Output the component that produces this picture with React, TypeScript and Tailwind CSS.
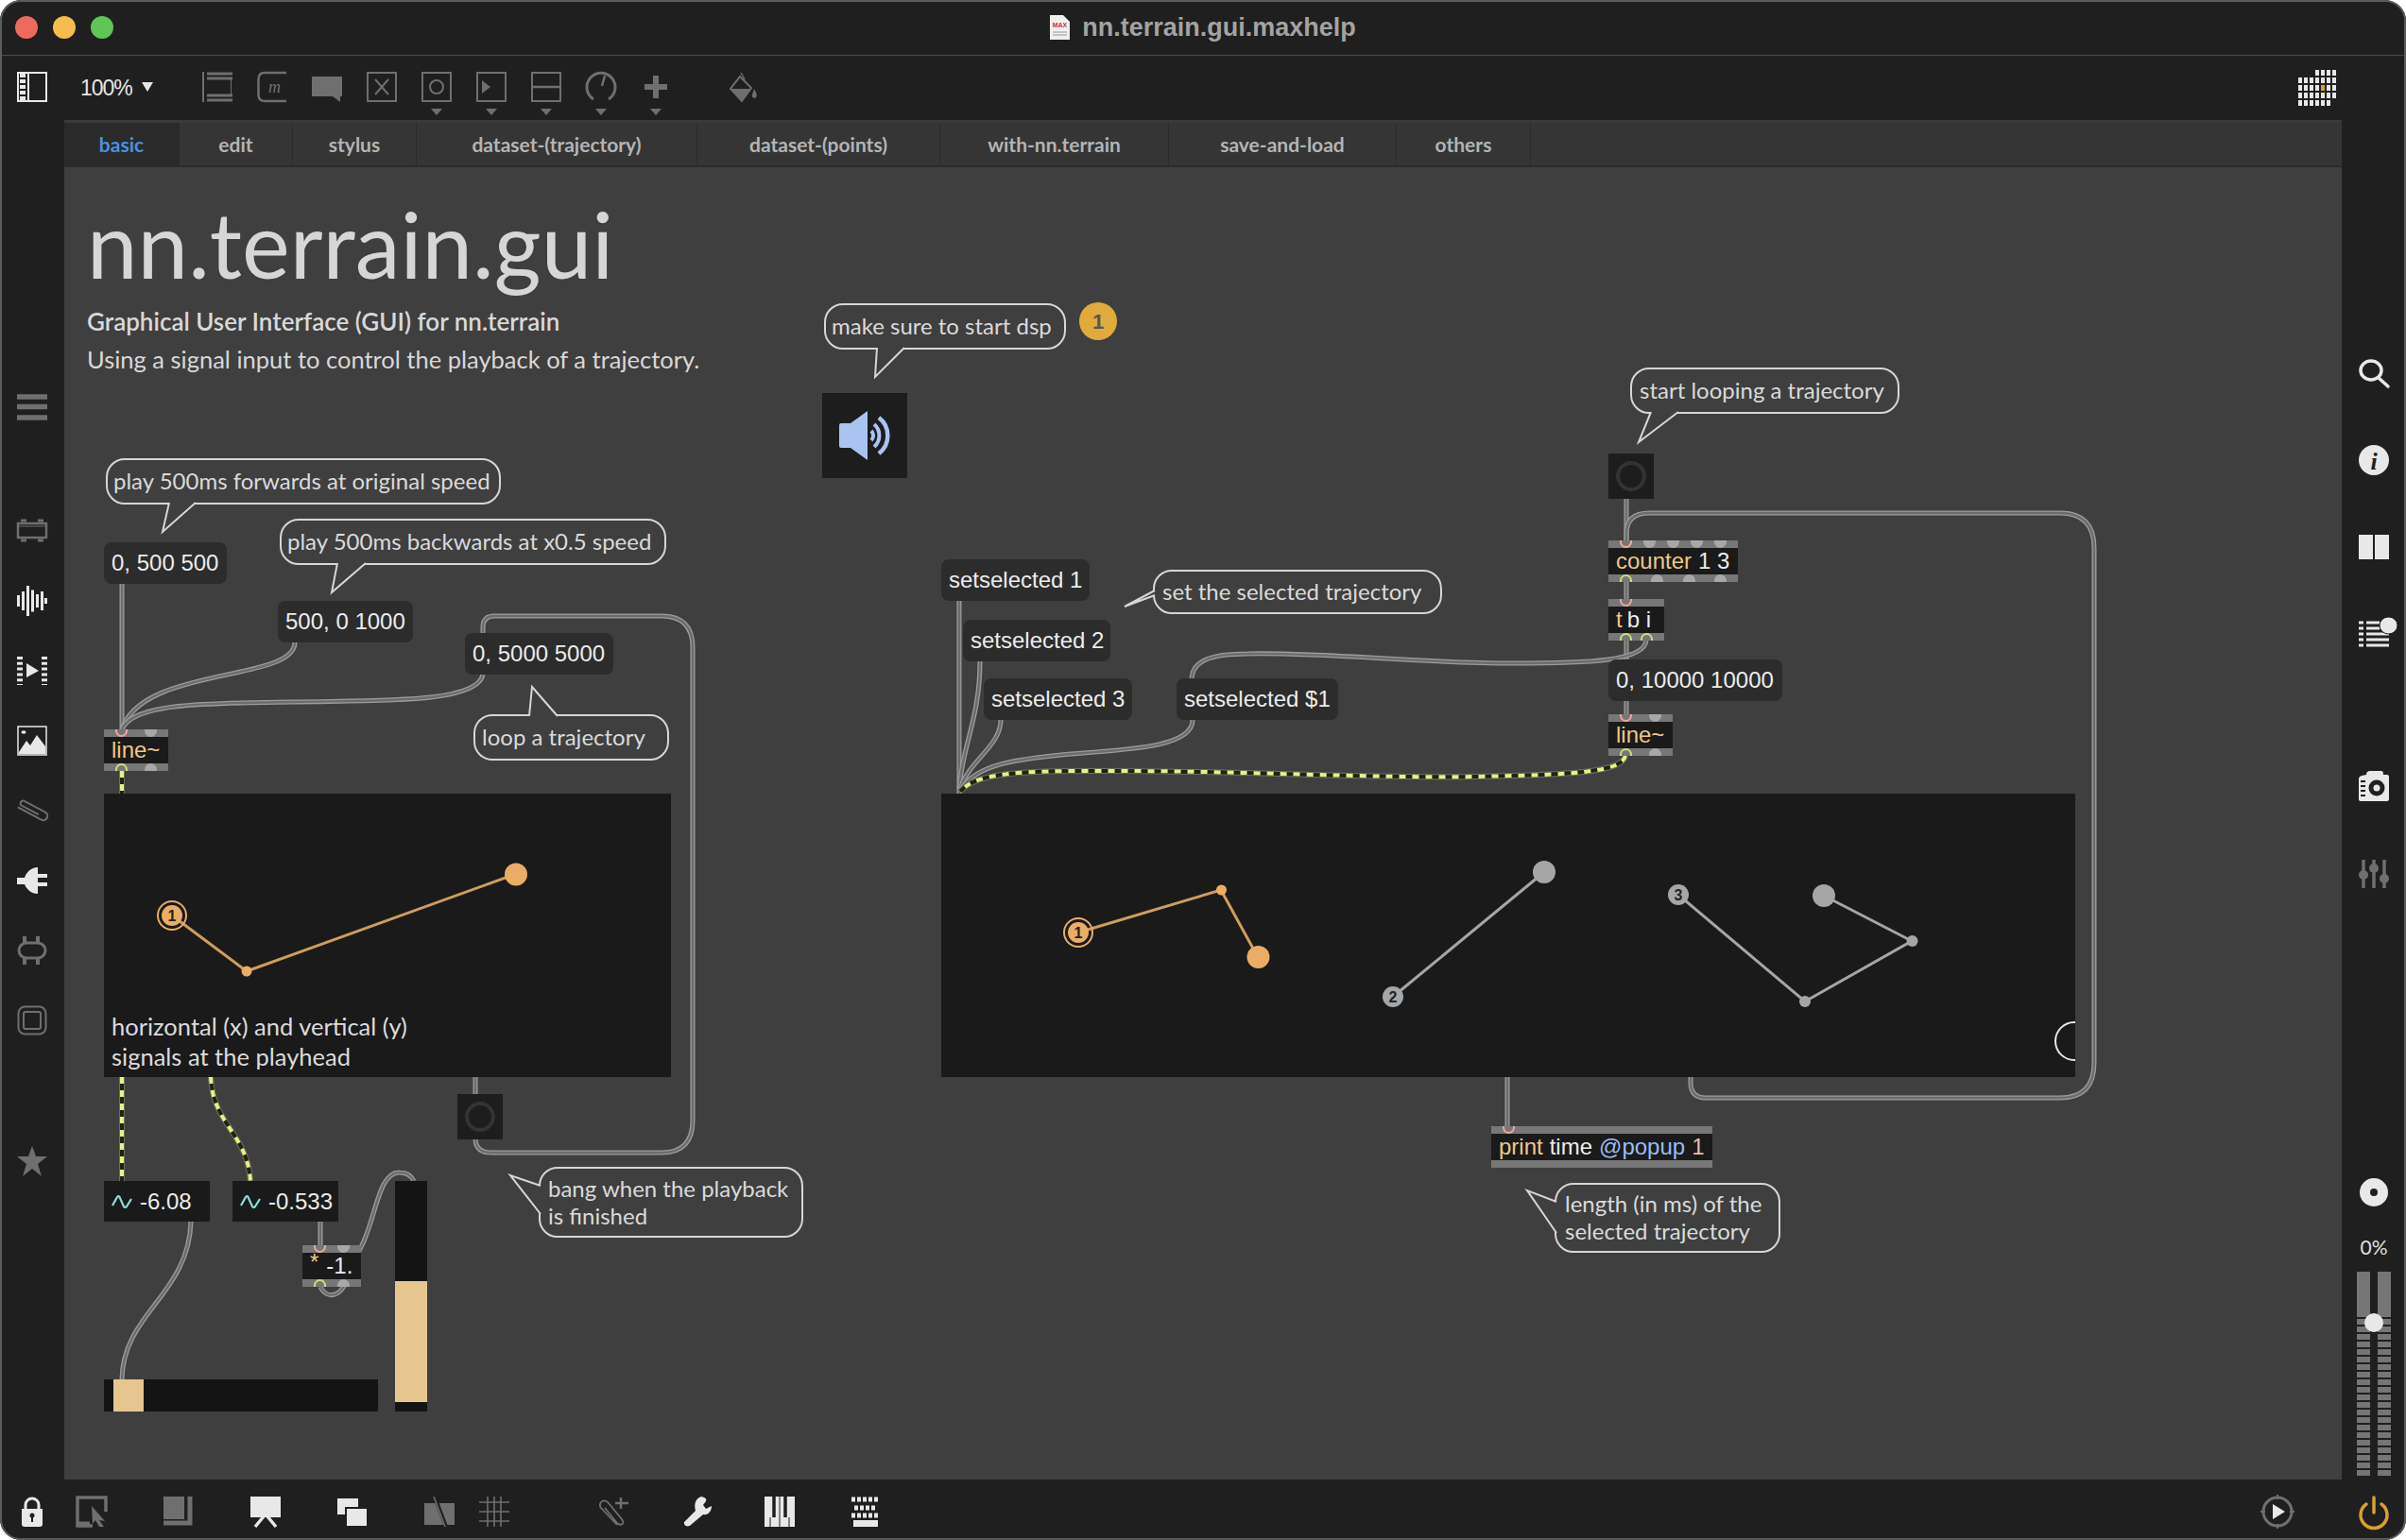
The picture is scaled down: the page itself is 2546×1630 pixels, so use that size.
import React from 'react';
import clsx from 'clsx';

const GRAY = '#6f6f6f';
const WHITE = '#e8e8e8';
const CANVAS = '#3f3f3f';

const Ic: React.FC<{ children: React.ReactNode; className?: string }> = ({ children, className }) => (
  <svg viewBox="0 0 32 32" className={clsx('w-8 h-8 shrink-0 overflow-visible', className)}>
    {children}
  </svg>
);

/* ---------- toolbar icons ---------- */
const ToolIcons = [
  <>
    <path d="M1 0V32" stroke={GRAY} strokeWidth="2" />
    <path d="M5 2H32M5 7H32M5 25H32M5 30H32" stroke={GRAY} strokeWidth="3" />
    <path d="M30.5 7V25" stroke={GRAY} strokeWidth="1" />
  </>,
  <>
    <path d="M31 1H8Q1.5 1 1.5 8V24Q1.5 31 8 31H31" stroke={GRAY} strokeWidth="2.5" fill="none" />
    <text x="12" y="22" fontSize="18" fontStyle="italic" fontFamily="Liberation Serif" fill={GRAY}>m</text>
  </>,
  <path d="M0 5H32V26H30V32L22 26H0Z" fill={GRAY} />,
  <>
    <rect x="1" y="1" width="30" height="30" stroke={GRAY} strokeWidth="2" fill="none" />
    <path d="M9 8L23 24M23 8L9 24" stroke={GRAY} strokeWidth="2" />
  </>,
  <>
    <rect x="1" y="1" width="30" height="30" stroke={GRAY} strokeWidth="2" fill="none" />
    <circle cx="16" cy="16" r="7" stroke={GRAY} strokeWidth="2" fill="none" />
  </>,
  <>
    <rect x="1" y="1" width="30" height="30" stroke={GRAY} strokeWidth="2" fill="none" />
    <path d="M6 9L15 16L6 23Z" fill={GRAY} />
  </>,
  <>
    <rect x="1" y="1" width="30" height="30" stroke={GRAY} strokeWidth="2" fill="none" />
    <path d="M1 16H31" stroke={GRAY} strokeWidth="2.5" />
  </>,
  <>
    <path d="M8 29A15 15 0 1 1 24 29" stroke={GRAY} strokeWidth="3" fill="none" />
    <path d="M17 15L20 4" stroke={GRAY} strokeWidth="2.5" />
  </>,
  <path d="M13 4H19V13H28V19H19V28H13V19H4V13H13Z" fill={GRAY} />,
  <>
    <path d="M13 1L17 8" stroke={GRAY} strokeWidth="1.5" />
    <path d="M12 5L24 17L14 31L2 18Z" stroke={GRAY} strokeWidth="2" fill="none" />
    <path d="M3 18H24L14 31Z" fill={GRAY} />
    <path d="M27 18C29 22 31 24 29 27C27 29 24 27 25 24Z" fill={GRAY} />
  </>,
];

const GridIcon = () => {
  const cells = [] as React.ReactNode[];
  for (let r = 0; r < 5; r++) {
    for (let c = 0; c < 7; c++) {
      if (r === 0 && c < 3) continue;
      if (r === 4 && c === 6) continue;
      cells.push(<rect key={`${r}-${c}`} x={c * 6} y={r * 8} width="4" height="6" fill={r === 2 && c === 4 ? '#d9a02f' : WHITE} />);
    }
  }
  return <svg viewBox="0 0 40 38" className="w-10 h-[38px]">{cells}</svg>;
};

/* ---------- left sidebar icons ---------- */
const LeftIcons = [
  <>
    <rect x="1" y="8" width="30" height="15" stroke={GRAY} strokeWidth="2.5" fill="none" />
    <path d="M4 5H10M22 5H28M4 26H10M22 26H28" stroke={GRAY} strokeWidth="3" />
    <path d="M2 11H30" stroke={GRAY} strokeWidth="1" />
  </>,
  <>
    {[[1, 12], [6, 20], [11, 32], [16, 23], [21, 14], [26, 20], [30, 6]].map(([x, h]) => (
      <rect key={x} x={x - 1} y={16 - h / 2} width="3" height={h} fill={WHITE} />
    ))}
  </>,
  <>
    <path d="M3 1V31M29 1V31" stroke={WHITE} strokeWidth="6" strokeDasharray="3 2.8" />
    <path d="M10 8L23 16L10 23Z" fill={WHITE} />
  </>,
  <>
    <rect x="1" y="1" width="30" height="30" stroke={WHITE} strokeWidth="1.5" fill="none" />
    <ellipse cx="7" cy="7" rx="2.5" ry="1.8" fill={WHITE} />
    <path d="M2 28L10 16L14 21L21 10L30 22V30H2Z" fill={WHITE} />
  </>,
  <path d="M1 20H29A4.5 4.5 0 0 0 29 11H3A3 3 0 0 0 3 16.5H24" stroke={GRAY} strokeWidth="2" fill="none" transform="rotate(28 16 16)" />,
  <path d="M0 13H8C10 7 15 2 22 2V9H32V13H22V18H32V22H22V30C15 30 10 25 8 20H0Z" fill={WHITE} />,
  <>
    <rect x="2" y="8" width="28" height="16" rx="8" stroke={GRAY} strokeWidth="3" fill="none" />
    <path d="M8 1V8M22 1V8M8 24V31M22 24V31" stroke={GRAY} strokeWidth="4" />
  </>,
  <>
    <rect x="1.5" y="1.5" width="29" height="29" rx="7" stroke={GRAY} strokeWidth="2" fill="none" />
    <rect x="7" y="7" width="18" height="18" rx="2" stroke={GRAY} strokeWidth="2" fill="none" />
  </>,
];

const StarIcon = () => <Ic><path d="M16 0L20 11H32L22 19L26 32L16 24L6 32L10 19L0 11H12Z" fill={GRAY} /></Ic>;

/* ---------- right sidebar icons ---------- */
const RightIcons = {
  search: (
    <Ic>
      <ellipse cx="13" cy="13" rx="11" ry="10" stroke={WHITE} strokeWidth="3.5" fill="none" />
      <path d="M21 21L31 30" stroke={WHITE} strokeWidth="3.5" strokeLinecap="round" />
    </Ic>
  ),
  info: (
    <Ic>
      <circle cx="16" cy="16" r="16" fill={WHITE} />
      <text x="16" y="26" textAnchor="middle" fontSize="26" fontStyle="italic" fontWeight="700" fontFamily="Liberation Serif" fill="#1f1f1f">i</text>
    </Ic>
  ),
  book: (
    <Ic>
      <rect x="0" y="3" width="15" height="26" fill={WHITE} />
      <rect x="17" y="3" width="15" height="26" fill={WHITE} />
    </Ic>
  ),
  list: (
    <Ic>
      <path d="M0 4H5M8 4H22M0 10H5M8 10H22M0 16H5M8 16H32M0 22H5M8 22H32M0 28H5M8 28H32" stroke={WHITE} strokeWidth="3" />
      <ellipse cx="31.5" cy="7" rx="9.5" ry="9" fill={WHITE} stroke="#1f1f1f" strokeWidth="1" />
    </Ic>
  ),
  camera: (
    <Ic>
      <path d="M8 4Q8 0 12 0H24Q26 0 26 4H30Q32 4 32 6V30Q32 32 30 32H2Q0 32 0 30V8Q0 6 3 5Z" fill={WHITE} />
      <circle cx="19" cy="18" r="8.5" fill="#1f1f1f" />
      <circle cx="19" cy="18" r="3.5" fill={WHITE} />
      <path d="M2 11H7M2 16H7M2 21H7M2 26H7" stroke="#1f1f1f" strokeWidth="2" />
    </Ic>
  ),
  sliders: (
    <Ic>
      <path d="M5 1V31M16 1V31M27 1V31" stroke={GRAY} strokeWidth="3.5" />
      <circle cx="5" cy="17" r="5" fill={GRAY} />
      <circle cx="16" cy="10" r="5" fill={GRAY} />
      <circle cx="27" cy="21" r="5" fill={GRAY} />
    </Ic>
  ),
  disc: (
    <Ic>
      <circle cx="16" cy="16" r="15" fill={WHITE} />
      <circle cx="16" cy="16" r="4" fill="#1f1f1f" />
    </Ic>
  ),
};

/* ---------- bottom bar icons ---------- */
const BottomIcons: { ml: string; icon: React.ReactNode }[] = [
  {
    ml: 'ml-[18px]',
    icon: (
      <>
        <path d="M9 14V9A7 7 0 0 1 23 9V14" stroke={WHITE} strokeWidth="3" fill="none" />
        <path d="M5 13H27V29Q27 32 24 32H8Q5 32 5 29Z" fill={WHITE} />
        <circle cx="16" cy="20" r="2.5" fill="#1f1f1f" />
        <path d="M16 20V27" stroke="#1f1f1f" strokeWidth="2" />
      </>
    ),
  },
  {
    ml: 'ml-[31px]',
    icon: (
      <>
        <path d="M31 16V1H1V31H17" stroke={GRAY} strokeWidth="3.5" fill="none" />
        <path d="M1 29H14" stroke={GRAY} strokeWidth="5" />
        <path d="M16 10L30 26L24 25L29 32L24 32L20 25L17 29Z" fill={GRAY} />
      </>
    ),
  },
  {
    ml: 'ml-[60px]',
    icon: (
      <>
        <rect x="0" y="0" width="22" height="24" fill={GRAY} />
        <path d="M28 0V28H0" stroke={GRAY} strokeWidth="5" fill="none" />
      </>
    ),
  },
  {
    ml: 'ml-[60px]',
    icon: (
      <>
        <rect x="0" y="0" width="32" height="22" fill={WHITE} />
        <path d="M14 21L5 32M18 21L27 32" stroke={WHITE} strokeWidth="3.5" />
      </>
    ),
  },
  {
    ml: 'ml-[60px]',
    icon: (
      <>
        <rect x="0" y="2" width="22" height="17" fill={WHITE} />
        <rect x="9" y="12" width="23" height="20" fill={WHITE} stroke="#1f1f1f" strokeWidth="2" />
      </>
    ),
  },
  {
    ml: 'ml-[60px]',
    icon: (
      <>
        <rect x="0" y="7" width="32" height="23" fill={GRAY} />
        <path d="M11 0L23 32" stroke="#1f1f1f" strokeWidth="4" />
        <path d="M10 0L22 32" stroke={GRAY} strokeWidth="1.5" />
      </>
    ),
  },
  {
    ml: 'ml-[26px]',
    icon: <path d="M9 0V32M16 0V32M23 0V32M0 6H32M0 16H32M0 26H32" stroke={GRAY} strokeWidth="1.6" />,
  },
  {
    ml: 'ml-[94px]',
    icon: (
      <>
        <path d="M20 30L3 12C-1 7 6 1 11 7L25 24C29 30 23 31 20 28L7 12" stroke={GRAY} strokeWidth="1.8" fill="none" />
        <path d="M24 1V13M18 7H32" stroke={GRAY} strokeWidth="2.5" />
      </>
    ),
  },
  {
    ml: 'ml-[57px]',
    icon: (
      <path d="M20 0C25 1 26 3 25 5L22 9L25 13L31 10C31 16 27 20 22 19L9 30C6 33 1 31 2 27L14 15C12 8 14 2 20 0Z" fill={WHITE} />
    ),
  },
  {
    ml: 'ml-[55px]',
    icon: (
      <>
        <rect x="0" y="0" width="32" height="32" fill={WHITE} />
        <path d="M10 0V22M22 0V22" stroke="#1f1f1f" strokeWidth="3.5" />
        <path d="M6 22V32M16 0V32M26 22V32" stroke="#1f1f1f" strokeWidth="1" />
      </>
    ),
  },
  {
    ml: 'ml-[59px]',
    icon: (
      <>
        <path d="M1 3H31M4 12H28M1 20H31" stroke={WHITE} strokeWidth="5" strokeDasharray="4 2" fill="none" />
        <rect x="3" y="25" width="26" height="7" fill={WHITE} />
      </>
    ),
  },
];

/* ---------- patcher pieces ---------- */
const Msg: React.FC<{ className: string; children: React.ReactNode }> = ({ className, children }) => (
  <div className={clsx('absolute h-11 rounded-lg bg-[#2c2c2c] pl-2 flex items-center whitespace-nowrap font-["Liberation_Sans"] text-[24px] text-[#ececec]', className)}>
    {children}
  </div>
);

const Comment: React.FC<{ className: string; pad?: string; children: React.ReactNode }> = ({ className, pad = 'pl-[6px]', children }) => (
  <div className={clsx('absolute flex items-center rounded-[20px] border-2 border-[#d6d6d6] pb-[2px] whitespace-pre text-[24px] leading-[29px] text-[#dadada]', pad, className)}>
    <span>{children}</span>
  </div>
);

const Inlet = ({ on }: { on?: boolean }) => (
  <span className={clsx('w-[13px] h-2 rounded-b-full', on ? 'border-2 border-t-0 border-[#eda89a]' : 'bg-[#a8a8a8]')} />
);
const Outlet = ({ on }: { on?: boolean }) => (
  <span className={clsx('w-[13px] h-2 rounded-t-full', on ? 'border-2 border-b-0 border-[#cfe07c]' : 'bg-[#a8a8a8]')} />
);

const Obj: React.FC<{ className: string; inlets?: number; outlets?: number; on?: number[]; children: React.ReactNode }> = ({ className, inlets = 0, outlets = 0, on = [], children }) => (
  <div className={clsx('absolute h-11 flex flex-col bg-[#1a1a1a] whitespace-nowrap font-["Liberation_Sans"] text-[24px] text-[#ececec]', className)}>
    <div className="h-2 bg-[#777] flex justify-between px-3">
      {Array.from({ length: inlets }).map((_, i) => <Inlet key={i} on={i === 0} />)}
    </div>
    <div className="flex-1 pl-2 flex items-center leading-none">{children}</div>
    <div className="h-2 bg-[#777] flex justify-between px-3">
      {Array.from({ length: outlets }).map((_, i) => <Outlet key={i} on={i === 0 || on.includes(i)} />)}
    </div>
  </div>
);

const Bang = ({ className }: { className: string }) => (
  <div className={clsx('absolute w-12 h-12 bg-[#1d1d1d] flex items-center justify-center', className)}>
    <div className="w-8 h-8 rounded-full border-4 border-[#333]" />
  </div>
);

const NumTilde: React.FC<{ className: string; value: string }> = ({ className, value }) => (
  <div className={clsx('absolute h-[43px] w-28 bg-[#1a1a1a] pl-2 flex items-center gap-2 font-["Liberation_Sans"] text-[24px] text-[#ececec]', className)}>
    <svg viewBox="0 0 22 16" className="w-[22px] h-4">
      <path d="M1 12L6 3Q7 1 8.5 3L13 13Q14.5 15 16 13L21 5" stroke="#8fdde0" strokeWidth="2.2" fill="none" />
    </svg>
    <span>{value}</span>
  </div>
);

const Wire = ({ d }: { d: string }) => (
  <>
    <path d={d} fill="none" stroke="#9c9c9c" strokeWidth="5" />
    <path d={d} fill="none" stroke="#6c6c6c" strokeWidth="2.4" />
  </>
);

const SigWire = ({ d }: { d: string }) => (
  <>
    <path d={d} fill="none" stroke="#70705f" strokeWidth="6" />
    <path d={d} fill="none" stroke="#20230f" strokeWidth="4" />
    <path d={d} fill="none" stroke="#e8f08c" strokeWidth="4" strokeDasharray="7 7" />
  </>
);

const Tail = ({ d }: { d: string }) => <path d={d} fill={CANVAS} stroke="#d6d6d6" strokeWidth="2" />;

const NODE_ORANGE = '#e9ad66';
const LINE_ORANGE = '#cf9d5e';
const NODE_GRAY = '#a6a6a6';

const Labeled: React.FC<{ x: number; y: number; n: string; fill: string; ring?: boolean }> = ({ x, y, n, fill, ring }) => (
  <>
    {ring && <circle cx={x} cy={y} r="15" fill="none" stroke={fill} strokeWidth="2" />}
    <circle cx={x} cy={y} r="11" fill={fill} />
    <text x={x} y={y + 6} textAnchor="middle" fontSize="16" fontWeight="700" fontFamily="Liberation Sans" fill="#222">{n}</text>
  </>
);

const TABS = [
  { label: 'basic', w: 'w-[122px]' },
  { label: 'edit', w: 'w-[120px]' },
  { label: 'stylus', w: 'w-[131px]' },
  { label: 'dataset-(trajectory)', w: 'w-[297px]' },
  { label: 'dataset-(points)', w: 'w-[257px]' },
  { label: 'with-nn.terrain', w: 'w-[242px]' },
  { label: 'save-and-load', w: 'w-[241px]' },
  { label: 'others', w: 'w-[142px]' },
];

const Patcher = () => (
  <div className="relative flex-1 bg-[#3f3f3f] overflow-hidden">
    {/* cables, in window coordinates */}
    <svg viewBox="68 177 2410 1389" className="absolute inset-0 w-full h-full">
      <Wire d="M129 618V772" />
      <Wire d="M312 680C312 722 150 705 129 772" />
      <Wire d="M511 714C505 745 400 741 310 743C210 744 140 745 129 772" />
      <Wire d="M511 670V664Q511 652 523 652H700Q733 652 733 685V1186Q733 1220 700 1220H520Q503 1220 503 1205" />
      <Wire d="M503 1140V1158" />
      <SigWire d="M129 816V840" />
      <SigWire d="M129 1140V1250" />
      <SigWire d="M223 1140C225 1190 262 1200 265 1250" />
      <Wire d="M202 1293C200 1370 130 1390 129 1460" />
      <Wire d="M339 1293V1318" />
      <Wire d="M339 1362C345 1375 362 1375 368 1350L382 1320C398 1290 400 1240 423 1241C432 1241 436 1246 438 1250" />
      <Wire d="M1015 636V840" />
      <Wire d="M1037 700C1037 760 1018 790 1015 835" />
      <Wire d="M1059 762C1059 790 1025 805 1016 835" />
      <Wire d="M1262 762C1262 790 1200 793 1133 798C1080 803 1030 808 1016 838" />
      <SigWire d="M1720 800C1716 818 1660 820 1560 822C1450 824 1300 815 1150 816C1070 816 1030 820 1016 838" />
      <Wire d="M1721 528V572" />
      <Wire d="M1721 616V634" />
      <Wire d="M1721 678V698" />
      <Wire d="M1721 742V756" />
      <Wire d="M1721 572V565Q1721 543 1745 543H2180Q2216 543 2216 580V1125Q2216 1162 2180 1162H1805Q1789 1162 1789 1146V1140" />
      <Wire d="M1742 678C1740 700 1680 702 1600 702C1500 702 1400 690 1320 692C1280 692 1262 700 1261 718" />
      <Wire d="M1595 1140V1192" />
    </svg>

    {/* title block */}
    <h1 className="absolute left-[24px] top-[26px] text-[96px] leading-[110px] font-normal text-[#d6d6d6] whitespace-nowrap">nn.terrain.gui</h1>
    <p className="absolute left-[24px] top-[148px] text-[26px] leading-[30px] font-semibold text-[#d8d8d8] whitespace-nowrap">Graphical User Interface (GUI) for nn.terrain</p>
    <p className="absolute left-[24px] top-[188px] text-[25.5px] leading-[30px] font-normal text-[#d8d8d8] whitespace-nowrap">Using a signal input to control the playback of a trajectory.</p>

    {/* dsp */}
    <Comment className="left-[804px] top-[144px] w-[256px] h-[49px]">make sure to start dsp</Comment>
    <div className="absolute left-[1074px] top-[143px] w-10 h-10 rounded-full bg-[#e0aa3c] flex items-center justify-center font-['Liberation_Sans'] font-bold text-[22px] text-[#555]">1</div>
    <div className="absolute left-[802px] top-[239px] w-[90px] h-[90px] bg-[#1d1d1d]">
      <svg viewBox="0 0 90 90" className="w-full h-full">
        <path d="M20 32H30L48 19V71L30 58H20Q18 58 18 56V34Q18 32 20 32Z" fill="#aac4f2" />
        <path d="M52 40A7 7 0 0 1 52 50" stroke="#aac4f2" strokeWidth="4" fill="none" />
        <path d="M55 33A16 16 0 0 1 55 57" stroke="#aac4f2" strokeWidth="4" fill="none" />
        <path d="M60 26A24 24 0 0 1 60 64" stroke="#aac4f2" strokeWidth="4.5" fill="none" />
      </svg>
    </div>

    {/* left patch */}
    <Comment className="left-[44px] top-[308px] w-[418px] h-[49px]">play 500ms forwards at original speed</Comment>
    <Comment className="left-[228px] top-[372px] w-[409px] h-[49px]">play 500ms backwards at x0.5 speed</Comment>
    <Comment className="left-[433px] top-[579px] w-[207px] h-[49px]" pad="pl-[7px]">loop a trajectory</Comment>
    <Comment className="left-[502px] top-[1058px] w-[280px] h-[75px]" pad="pl-[8px]">{'bang when the playback\nis finished'}</Comment>
    <Msg className="left-[42px] top-[397px] w-[130px]">0, 500 500</Msg>
    <Msg className="left-[226px] top-[459px] w-[143px]">500, 0 1000</Msg>
    <Msg className="left-[424px] top-[493px] w-[157px]">0, 5000 5000</Msg>
    <Obj className="left-[42px] top-[595px] w-[68px]" inlets={2} outlets={2}><span className="text-[#edc888]">line~</span></Obj>

    <div className="absolute left-[42px] top-[663px] w-[600px] h-[300px] bg-[#1a1a1a]">
      <svg viewBox="110 840 600 300" className="absolute inset-0 w-full h-full">
        <path d="M182 969L261 1028L546 925" fill="none" stroke={LINE_ORANGE} strokeWidth="3" />
        <circle cx="261" cy="1028" r="5.5" fill={NODE_ORANGE} />
        <circle cx="546" cy="925.5" r="12" fill={NODE_ORANGE} />
        <Labeled x={182} y={969} n="1" fill={NODE_ORANGE} ring />
      </svg>
      <p className="absolute left-2 bottom-[6px] text-[25.5px] leading-[32px] font-normal text-[#dcdcdc] whitespace-nowrap">horizontal (x) and vertical (y)<br />signals at the playhead</p>
    </div>

    <Bang className="left-[416px] top-[981px]" />
    <NumTilde className="left-[42px] top-[1073px]" value="-6.08" />
    <NumTilde className="left-[178px] top-[1073px]" value="-0.533" />
    <Obj className="left-[252px] top-[1141px] w-[62px]" inlets={2} outlets={2}>
      <span className="text-[#edc888] mr-2 -mt-2">*</span>-1.
    </Obj>
    <div className="absolute left-[42px] top-[1283px] w-[290px] h-[34px] bg-[#141414] pl-[10px]">
      <div className="w-8 h-full bg-[#e6c58e]" />
    </div>
    <div className="absolute left-[350px] top-[1073px] w-[34px] h-[244px] bg-[#141414] pt-[106px]">
      <div className="h-[128px] bg-[#e6c58e]" />
    </div>

    {/* right patch */}
    <Comment className="left-[1657px] top-[212px] w-[285px] h-[49px]" pad="pl-[8px]">start looping a trajectory</Comment>
    <Comment className="left-[1152px] top-[426px] w-[306px] h-[47px]" pad="pl-[8px]">set the selected trajectory</Comment>
    <Comment className="left-[1577px] top-[1075px] w-[239px] h-[74px]" pad="pl-[9px]">{'length (in ms) of the\nselected trajectory'}</Comment>
    <Msg className="left-[928px] top-[415px] w-[157px]">setselected 1</Msg>
    <Msg className="left-[951px] top-[479px] w-[156px]">setselected 2</Msg>
    <Msg className="left-[973px] top-[541px] w-[157px]">setselected 3</Msg>
    <Msg className="left-[1177px] top-[541px] w-[171px]">setselected $1</Msg>
    <Bang className="left-[1634px] top-[303px]" />
    <Obj className="left-[1634px] top-[395px] w-[137px]" inlets={5} outlets={4}>
      <span className="text-[#edc888] mr-[7px]">counter</span>1 3
    </Obj>
    <Obj className="left-[1634px] top-[457px] w-[59px]" inlets={1} outlets={2} on={[1]}>
      <span className="text-[#edc888] mr-[5px]">t</span>b i
    </Obj>
    <Msg className="left-[1634px] top-[521px] w-[184px]">0, 10000 10000</Msg>
    <Obj className="left-[1634px] top-[579px] w-[68px]" inlets={2} outlets={2}><span className="text-[#edc888]">line~</span></Obj>

    <div className="absolute left-[928px] top-[663px] w-[1200px] h-[300px] bg-[#1a1a1a] overflow-hidden">
      <svg viewBox="996 840 1200 300" className="absolute inset-0 w-full h-full">
        <path d="M1141 987L1292 942L1331 1013" fill="none" stroke={LINE_ORANGE} strokeWidth="3" />
        <circle cx="1292.5" cy="942" r="5.5" fill={NODE_ORANGE} />
        <circle cx="1331.5" cy="1013" r="12" fill={NODE_ORANGE} />
        <Labeled x={1141} y={987} n="1" fill={NODE_ORANGE} ring />
        <path d="M1474 1055L1634 923" fill="none" stroke={NODE_GRAY} strokeWidth="3" />
        <circle cx="1634" cy="923" r="12" fill={NODE_GRAY} />
        <Labeled x={1474} y={1055} n="2" fill={NODE_GRAY} />
        <path d="M1776 947L1910 1060L2023 996L1930 948" fill="none" stroke={NODE_GRAY} strokeWidth="3" />
        <circle cx="1910" cy="1060" r="6" fill={NODE_GRAY} />
        <circle cx="2023.5" cy="996" r="6" fill={NODE_GRAY} />
        <circle cx="1930" cy="948" r="12" fill={NODE_GRAY} />
        <Labeled x={1776} y={947} n="3" fill={NODE_GRAY} />
        <circle cx="2195" cy="1102" r="20" fill="none" stroke="#e6e6e6" strokeWidth="2" />
      </svg>
    </div>

    <Obj className="left-[1510px] top-[1015px] w-[234px]" inlets={1}>
      <span className="text-[#edc888] mr-[7px]">print</span>
      <span className="mr-[7px]">time</span>
      <span className="text-[#9dbcf2] mr-[7px]">@popup</span>
      <span className="text-[#f3b8a8]">1</span>
    </Obj>

    {/* comment tails go over the comment borders */}
    <svg viewBox="68 177 2410 1389" className="absolute inset-0 w-full h-full pointer-events-none">
      <Tail d="M179 532L172 563L207 532" />
      <Tail d="M357 596L351 627L387 596" />
      <Tail d="M560 758L563 727L590 758" />
      <Tail d="M928 368L926 399L957 368" />
      <Tail d="M572 1255L540 1244L572 1285" />
      <Tail d="M1747 436L1734 468L1776 436" />
      <Tail d="M1222 625L1190 642L1222 630" />
      <Tail d="M1647 1272L1616 1260L1647 1305" />
    </svg>
  </div>
);

const Meter = () => (
  <div className="relative mt-[14px] w-9 flex gap-2">
    {[0, 1].map((c) => (
      <div key={c} className="w-[14px] flex flex-col gap-[2px]">
        <div className="h-[48px] bg-[#757575]" />
        {Array.from({ length: 21 }).map((_, i) => (
          <div key={i} className="h-[6px] bg-[#757575]" />
        ))}
      </div>
    ))}
    <div className="absolute left-2 top-[44px] w-5 h-5 rounded-full bg-[#e8e8e8]" />
  </div>
);

export default function App() {
  return (
    <div className="w-[2546px] h-[1630px] bg-white overflow-hidden font-['Lato',sans-serif]">
      <div className="relative w-full h-full flex flex-col bg-[#1f1f1f] rounded-[22px] overflow-hidden">
        {/* title bar */}
        <div className="relative h-[59px] shrink-0 border-b border-[#4a4a4a] flex items-center justify-center gap-[13px]">
          <div className="absolute left-4 flex gap-4">
            <span className="w-6 h-6 rounded-full bg-[#ee6a5f]" />
            <span className="w-6 h-6 rounded-full bg-[#f5bd4f]" />
            <span className="w-6 h-6 rounded-full bg-[#61c554]" />
          </div>
          <svg viewBox="0 0 21 26" className="w-[21px] h-[26px]">
            <path d="M0 0H14L21 7V26H0Z" fill="#efefef" />
            <text x="10.5" y="13" textAnchor="middle" fontSize="7" fontWeight="700" fontFamily="Liberation Sans" fill="#c33">MAX</text>
            <path d="M3 18H18M3 21H18" stroke="#999" strokeWidth="1" />
          </svg>
          <span className="font-['Liberation_Sans'] font-bold text-[27px] text-[#a3a3a3]">nn.terrain.gui.maxhelp</span>
        </div>

        {/* toolbar */}
        <div className="relative h-[68px] shrink-0 flex items-start pt-[17px] pl-[18px]">
          <svg viewBox="0 0 32 32" className="w-8 h-8">
            <rect x="1" y="1" width="30" height="30" fill="none" stroke={WHITE} strokeWidth="2" />
            <path d="M12 1V31" stroke={WHITE} strokeWidth="2" />
            <path d="M6 2V30" stroke={WHITE} strokeWidth="6" strokeDasharray="4 2" />
          </svg>
          <span className="ml-[35px] mt-[1px] w-[54px] font-['Liberation_Sans'] text-[23px] leading-8 tracking-[-1px] text-[#e6e6e6]">100%</span>
          <span className="ml-[11px] mt-[11px] w-0 h-0 border-x-[6px] border-x-transparent border-t-[10px] border-t-[#e6e6e6]" />
          <div className="ml-[52px] flex gap-[26px]">
            {ToolIcons.map((icon, i) => (
              <div key={i} className={clsx('relative', i === 9 && 'ml-[35px]')}>
                <Ic>{icon}</Ic>
                {i >= 4 && i <= 8 && (
                  <span className="absolute left-[10px] top-[39px] w-0 h-0 border-x-[6px] border-x-transparent border-t-[7px] border-t-[#6f6f6f]" />
                )}
              </div>
            ))}
          </div>
          <div className="absolute left-[2432px] top-[15px]"><GridIcon /></div>
        </div>

        {/* middle */}
        <div className="flex-1 flex min-h-0">
          <div className="w-[68px] shrink-0 pt-[288px] pl-[18px] flex flex-col">
            <Ic>
              <path d="M0 5H32M0 15.5H32M0 27H32" stroke={GRAY} strokeWidth="5.5" />
            </Ic>
            <div className="mt-[99px] flex flex-col gap-[42px]">
              {LeftIcons.map((icon, i) => <Ic key={i}>{icon}</Ic>)}
            </div>
            <div className="mt-[117px]"><StarIcon /></div>
          </div>

          <div className="flex-1 flex flex-col min-w-0">
            <div className="h-[50px] shrink-0 flex bg-[#353535] border-t-[3px] border-b-2 border-t-[#3a3a3a] border-b-[#2b2b2b] text-[21px] font-bold text-[#b4b4b4]">
              {TABS.map((t, i) => (
                <div
                  key={t.label}
                  className={clsx(
                    t.w,
                    'h-full flex items-center justify-center border-r border-[#2b2b2b]',
                    i === 0 && 'bg-[#2a2a2a] text-[#4a90e2]'
                  )}
                >
                  {t.label}
                </div>
              ))}
            </div>
            <Patcher />
          </div>

          <div className="w-[68px] shrink-0 pt-[252px] flex flex-col items-center">
            {RightIcons.search}
            <div className="mt-[60px]">{RightIcons.info}</div>
            <div className="mt-[60px]">{RightIcons.book}</div>
            <div className="mt-[60px]">{RightIcons.list}</div>
            <div className="mt-[129px]">{RightIcons.camera}</div>
            <div className="mt-[61px]">{RightIcons.sliders}</div>
            <div className="mt-[305px]">{RightIcons.disc}</div>
            <div className="mt-[30px] text-[21px] leading-6 text-[#e0e0e0]">0%</div>
            <Meter />
          </div>
        </div>

        {/* bottom bar */}
        <div className="h-[64px] shrink-0 flex items-center pt-1 pr-[18px]">
          {BottomIcons.map((b, i) => (
            <Ic key={i} className={b.ml}>{b.icon}</Ic>
          ))}
          <svg viewBox="0 0 36 36" className="w-9 h-9 ml-auto">
            <circle cx="18" cy="18" r="15" fill="none" stroke={GRAY} strokeWidth="3" />
            <path d="M13 10L26 18L13 26Z" fill={WHITE} />
            <path d="M18 0V5M18 31V36M0 18H5M31 18H36" stroke={GRAY} strokeWidth="2" />
          </svg>
          <Ic className="ml-[68px]">
            <path d="M8 8A14 14 0 1 0 24 8" fill="none" stroke="#d9a02f" strokeWidth="3.5" strokeLinecap="round" />
            <path d="M16 1V17" stroke="#d9a02f" strokeWidth="3.5" strokeLinecap="round" />
          </Ic>
        </div>

        <div className="absolute inset-0 rounded-[22px] border-2 border-[#5c5c5c] pointer-events-none" />
      </div>
    </div>
  );
}
